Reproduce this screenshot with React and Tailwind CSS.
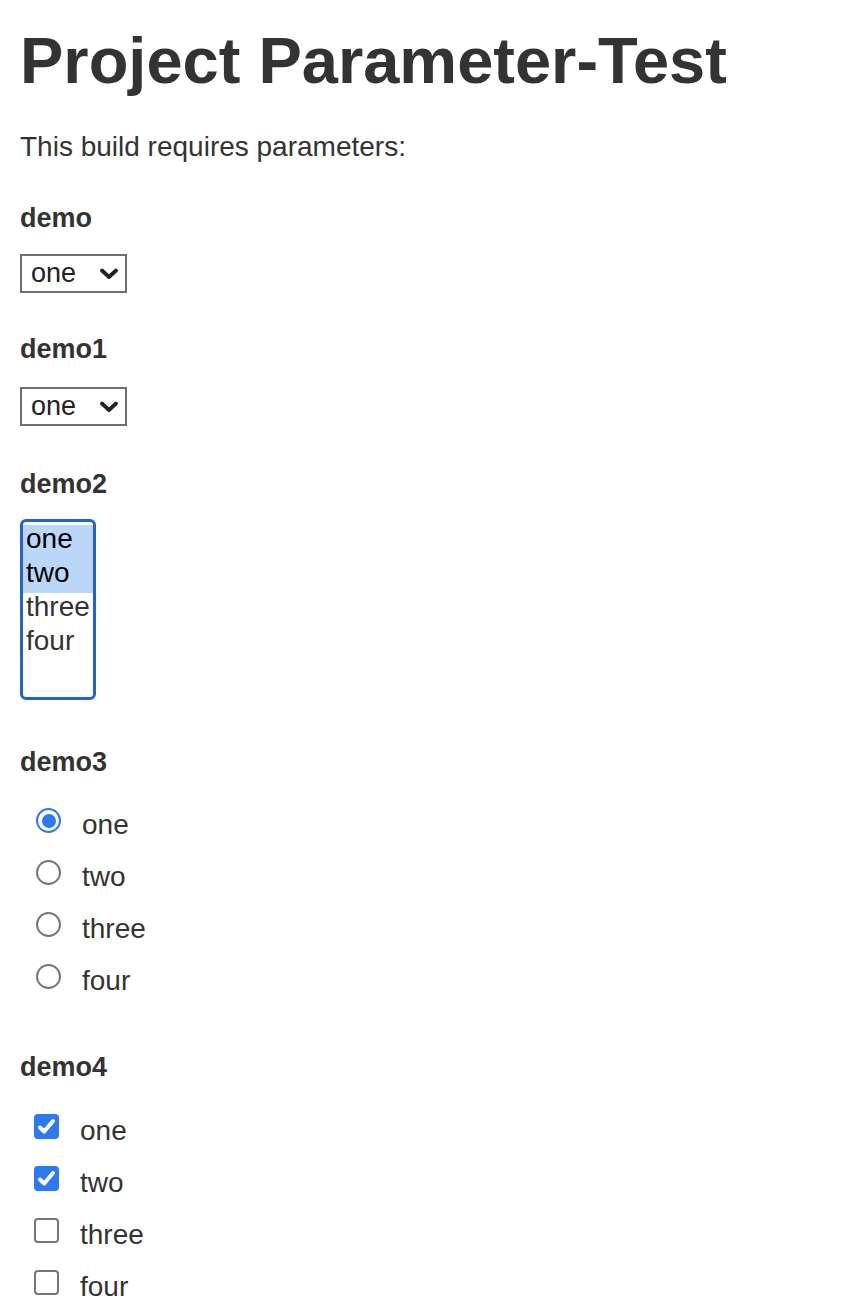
import { useState } from 'react'

const font = 'font-["Liberation_Sans","Helvetica_Neue",Arial,sans-serif]'

function Chevron() {
  return (
    <svg width="20" height="12" viewBox="0 0 20 12" fill="none">
      <path d="M3 2.5 L10 9 L17 2.5" stroke="#222" strokeWidth="3.8" strokeLinecap="round" strokeLinejoin="round" />
    </svg>
  )
}

function Dropdown({ value }) {
  return (
    <div className="flex h-[39px] w-[107px] items-center justify-between border-2 border-[#6f6f6f] bg-white pl-[9px] pr-[6px] text-[27px] text-[#222]">
      <span className="leading-none">{value}</span>
      <Chevron />
    </div>
  )
}

function ListBox({ options, selected }) {
  return (
    <div className="h-[181px] w-[76px] overflow-hidden rounded-[6px] border-[3px] border-[#2463cc] bg-white pt-[3px]">
      {options.map((o) => (
        <div
          key={o}
          className={
            'h-[34px] pl-[3px] text-[28px] leading-[28px] ' +
            (selected.includes(o) ? 'bg-[#bbd7f8] text-black' : 'text-[#333]')
          }
        >
          {o}
        </div>
      ))}
    </div>
  )
}

function Radio({ checked }) {
  if (checked) {
    return (
      <span className="flex h-[25px] w-[25px] items-center justify-center rounded-full border-[2.5px] border-[#2b78f0] bg-white">
        <span className="h-[14px] w-[14px] rounded-full bg-[#2b78f0]" />
      </span>
    )
  }
  return <span className="h-[25px] w-[25px] rounded-full border-2 border-[#767676] bg-white" />
}

function Checkbox({ checked }) {
  if (checked) {
    return (
      <span className="flex h-[25px] w-[25px] items-center justify-center rounded-[4px] bg-[#2b79f3]">
        <svg width="19" height="17" viewBox="0 0 19 17" fill="none">
          <path d="M3 9.5 L7.2 13.5 L16 3" stroke="#fff" strokeWidth="4" strokeLinecap="round" strokeLinejoin="round" />
        </svg>
      </span>
    )
  }
  return <span className="h-[25px] w-[25px] rounded-[4px] border-2 border-[#767676] bg-white" />
}

const opts = ['one', 'two', 'three', 'four']

export default function App() {
  const [radio] = useState('one')
  const [checks] = useState(['one', 'two'])

  return (
    <div className={`${font} min-h-[1312px] bg-white pl-[20px] text-[#333]`}>
      <h1 className="pt-[29px] text-[65px] font-bold leading-[64px]">Project Parameter-Test</h1>
      <p className="mt-[38px] text-[28px] leading-[32px]">This build requires parameters:</p>

      <div className="mt-[40px] text-[27px] font-bold leading-[30px]">demo</div>
      <div className="mt-[21px]">
        <Dropdown value="one" />
      </div>

      <div className="mt-[41px] text-[27px] font-bold leading-[30px]">demo1</div>
      <div className="mt-[23px]">
        <Dropdown value="one" />
      </div>

      <div className="mt-[43px] text-[27px] font-bold leading-[30px]">demo2</div>
      <div className="mt-[20px]">
        <ListBox options={opts} selected={['one', 'two']} />
      </div>

      <div className="mt-[47px] text-[27px] font-bold leading-[30px]">demo3</div>
      <div className="mt-[31px] flex flex-col gap-[27px] pl-[16px]">
        {opts.map((o) => (
          <div key={o} className="flex h-[25px] items-center">
            <Radio checked={radio === o} />
            <span className="ml-[21px] mt-[8px] text-[28px] leading-none">{o}</span>
          </div>
        ))}
      </div>

      <div className="mt-[63px] text-[27px] font-bold leading-[30px]">demo4</div>
      <div className="mt-[32px] flex flex-col gap-[27px] pl-[14px]">
        {opts.map((o) => (
          <div key={o} className="flex h-[25px] items-center">
            <Checkbox checked={checks.includes(o)} />
            <span className="ml-[21px] mt-[8px] text-[28px] leading-none">{o}</span>
          </div>
        ))}
      </div>
    </div>
  )
}
